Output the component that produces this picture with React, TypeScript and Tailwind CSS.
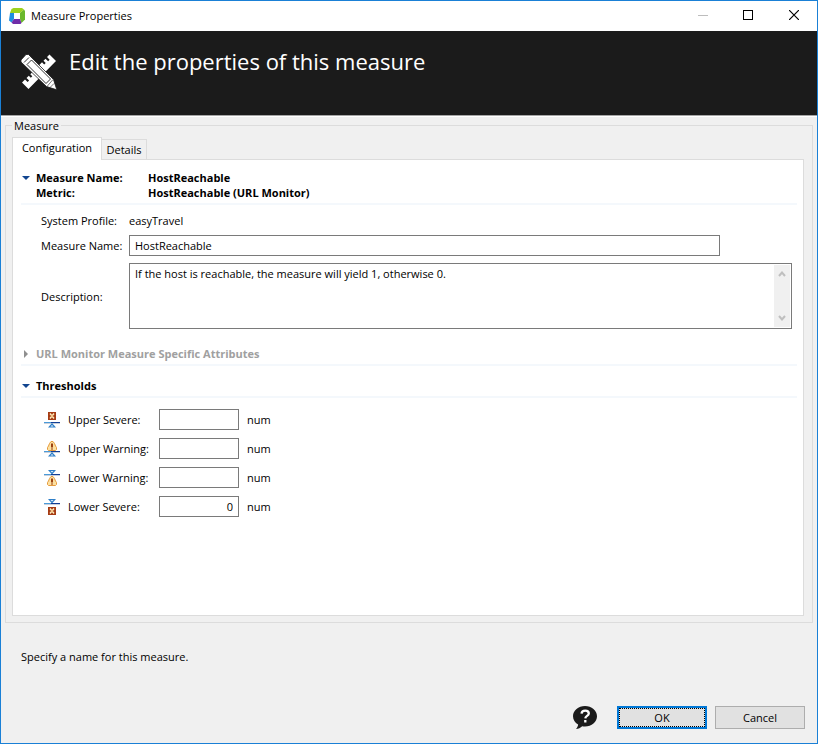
import { useState, type ReactNode } from "react";

function AppLogo() {
  return (
    <svg width="16" height="16" viewBox="0 0 16 16" aria-hidden="true">
      <path d="M4.500 0H13l2 1.500-4 3.500H5L1 5 2.500 1z" fill="#9bd21e" />
      <path d="M15 1.500l1 1.500v8.500L12.500 15 11 11V5z" fill="#6ab82c" />
      <path d="M1 5h4v6l-2.500 3.500L0 12.500z" fill="#1f8fe0" />
      <path d="M5 11h6l1.500 4-1 1H4l-1.500-1.500z" fill="#6f2da8" />
      <path d="M5 5h6v6H5z" fill="#ffffff" />
    </svg>
  );
}

function PencilRuler() {
  return (
    <svg width="36" height="36" viewBox="0 0 36 36" aria-hidden="true">
      <path
        d="M28.500 0.500l6.500 6.500L7.500 35 1 28.500l3-3 2.600 2.600 1.500-1.500L5.500 24l2.300-2.300 2 2 1.500-1.500-2-2L21 8.200l2.200 2.200 1.500-1.500-2.200-2.200 2-2 2.600 2.600 1.500-1.500L26 3z"
        fill="#ffffff"
      />
      <path d="M0 6L5 0.500h2.500L32.500 25.500l3.300 10.300-10.300-3.300L0 8z" fill="#ffffff" stroke="#1b1b1b" strokeWidth="0.800" />
      <path d="M3 8.500l5-5M6 10.500L25 29.500l4.500-4.500L10.500 6z" fill="none" stroke="#1b1b1b" strokeWidth="0.900" />
      <path d="M26 32.500l6-7" fill="none" stroke="#1b1b1b" strokeWidth="0.600" />
      <path d="M29 33.500l4-4" stroke="#1b1b1b" strokeWidth="0.600" />
    </svg>
  );
}

type Level = "severe" | "warning";

function SevereMark({ y }: { y: number }) {
  return (
    <g transform={`translate(4 ${y})`}>
      <rect width="8" height="8" fill="#a63c14" />
      <path d="M2 1.500l4 5M6 1.500l-4 5" fill="none" stroke="#fff0c0" strokeWidth="1.400" />
      <rect x="3" y="3" width="2" height="2" fill="#f4c88a" />
    </g>
  );
}

function WarningMark({ y }: { y: number }) {
  return (
    <g transform={`translate(3 ${y})`}>
      <path d="M4 .5h2l1.500 2 1 2.500 1 1.500v2l-1 1h-7l-1-1v-2l1-1.500 1-2.500z" fill="#fde0a0" stroke="#e59a3c" strokeWidth="1" />
      <path d="M4 2.500h2v4H4zM4 7.500h2v1H4z" fill="#9c4010" />
    </g>
  );
}

function ThresholdIcon({ level, upper }: { level: Level; upper: boolean }) {
  const markY = upper ? 0 : level === "severe" ? 8 : 6;
  return (
    <svg width="16" height="16" viewBox="0 0 16 16" aria-hidden="true">
      {level === "severe" ? <SevereMark y={markY} /> : <WarningMark y={markY} />}
      {upper ? (
        <g>
          <path d="M0 11h16v1H0z" fill="#c8d0dc" />
          <path d="M8 11l-4 4.500h8z" fill="#2f7fc8" />
          <path d="M8 13l-1.500 1.500h3z" fill="#e4f3fd" />
          <path d="M0 10h8v1H0z" fill="#4a9ad8" />
          <path d="M7 10h9v1H7z" fill="#123f96" />
        </g>
      ) : (
        <g>
          <path d="M0 5h16v1H0z" fill="#c8d0dc" />
          <path d="M4 0h8L8 4.500z" fill="#2f7fc8" />
          <path d="M6.500 1h3L8 2.500z" fill="#e4f3fd" />
          <path d="M0 4h8v1H0z" fill="#4a9ad8" />
          <path d="M7 4h9v1H7z" fill="#123f96" />
        </g>
      )}
    </svg>
  );
}

function Section({
  open,
  muted = false,
  onToggle,
  children,
}: {
  open: boolean;
  muted?: boolean;
  onToggle?: () => void;
  children: ReactNode;
}) {
  return (
    <button
      type="button"
      aria-expanded={open}
      onClick={onToggle}
      className={`flex w-full items-start border-b-2 border-[#f4f8fc] pb-[3px] text-left font-bold ${muted ? "text-[#a0a0a0]" : "text-black"}`}
    >
      <span className="flex h-[15px] w-[15px] shrink-0 items-center">
        {open ? (
          <svg width="10" height="6" viewBox="0 0 10 6" aria-hidden="true">
            <path d="M1 1h8L5 5z" fill="#11458f" />
          </svg>
        ) : (
          <svg width="10" height="8" viewBox="0 0 10 8" aria-hidden="true">
            <path d="M3 0l4 4-4 4z" fill="#8f8f8f" />
          </svg>
        )}
      </span>
      {children}
    </button>
  );
}

const thresholds: { id: string; label: string; level: Level; upper: boolean; value: string }[] = [
  { id: "upper-severe", label: "Upper Severe:", level: "severe", upper: true, value: "" },
  { id: "upper-warning", label: "Upper Warning:", level: "warning", upper: true, value: "" },
  { id: "lower-warning", label: "Lower Warning:", level: "warning", upper: false, value: "" },
  { id: "lower-severe", label: "Lower Severe:", level: "severe", upper: false, value: "0" },
];

function ConfigurationPanel() {
  const [detailsOpen, setDetailsOpen] = useState(false);
  return (
    <div role="tabpanel" className="flex-1 border border-[#dcdcdc] bg-white pt-[10px] pr-[6px] pl-2">
      <Section open>
        <span className="grid grid-cols-[112px_auto]">
          <span>Measure Name:</span>
          <span>HostReachable</span>
          <span>Metric:</span>
          <span>HostReachable (URL Monitor)</span>
        </span>
      </Section>

      <div className="grid grid-cols-[88px_1fr] items-center gap-y-[7px] pt-2 pr-[5px] pl-5">
        <span>System Profile:</span>
        <span>easyTravel</span>
        <label htmlFor="measure-name">Measure Name:</label>
        <input
          id="measure-name"
          defaultValue="HostReachable"
          className="mr-[72px] h-[21px] border border-[#7a7a7a] bg-white px-[5px] outline-none"
        />
        <label htmlFor="description">Description:</label>
        <div className="flex h-[66px] border border-[#7a7a7a] bg-white p-px">
          <textarea
            id="description"
            defaultValue="If the host is reachable, the measure will yield 1, otherwise 0."
            className="min-w-0 flex-1 resize-none overflow-hidden px-1 pt-px outline-none"
          />
          <div className="flex w-4 flex-col items-center justify-between bg-[#f0f0f0] py-[6px]" aria-hidden="true">
            <svg width="8" height="6" viewBox="0 0 8 6">
              <path d="M1 5l3-3.500L7 5" fill="none" stroke="#bfbfbf" strokeWidth="2" />
            </svg>
            <svg width="8" height="6" viewBox="0 0 8 6">
              <path d="M1 1l3 3.500L7 1" fill="none" stroke="#bfbfbf" strokeWidth="2" />
            </svg>
          </div>
        </div>
      </div>

      <div className="pt-[17px]">
        <Section open={detailsOpen} muted onToggle={() => setDetailsOpen(!detailsOpen)}>
          URL Monitor Measure Specific Attributes
        </Section>
      </div>
      <div className="pt-3">
        <Section open>Thresholds</Section>
      </div>

      <div className="flex flex-col gap-2 pt-[11px] pb-4 pl-[23px]">
        {thresholds.map((t) => (
          <div key={t.id} className="flex h-[21px] items-center">
            <ThresholdIcon level={t.level} upper={t.upper} />
            <label htmlFor={t.id} className="ml-2 w-[91px]">
              {t.label}
            </label>
            <input
              id={t.id}
              defaultValue={t.value}
              className="h-[21px] w-20 border border-[#7a7a7a] bg-white px-[5px] text-right outline-none"
            />
            <span className="ml-2">num</span>
          </div>
        ))}
      </div>
    </div>
  );
}

export default function App() {
  return (
    <div className="flex min-h-screen flex-col border border-[#1a80d6] bg-[#f0f0f0] font-['Open_Sans','Noto_Sans',sans-serif] text-[11px] leading-[15px] text-black">
      <header className="flex h-[30px] items-center bg-white pl-2">
        <AppLogo />
        <h1 className="ml-[6px] flex-1 pb-[2px]">Measure Properties</h1>
        <button type="button" aria-label="Minimize" className="flex h-full w-[45px] items-center justify-center pb-[2px]">
          <svg width="10" height="10" viewBox="0 0 10 10">
            <path d="M0 5.500h10" stroke="#bdbdbd" />
          </svg>
        </button>
        <button type="button" aria-label="Maximize" className="flex h-full w-[45px] items-center justify-center pb-[2px]">
          <svg width="10" height="10" viewBox="0 0 10 10">
            <rect x="0.500" y="0.500" width="9" height="9" fill="none" stroke="#000000" />
          </svg>
        </button>
        <button type="button" aria-label="Close" className="flex h-full w-[47px] items-center justify-center pb-[2px]">
          <svg width="10" height="10" viewBox="0 0 10 10">
            <path d="M0 0l10 10M10 0L0 10" stroke="#000000" strokeWidth="1.200" />
          </svg>
        </button>
      </header>

      <div className="flex h-[85px] border-b border-[#a5a5a5] bg-[#1b1b1b] pl-5">
        <div className="pt-[23px]">
          <PencilRuler />
        </div>
        <h2 className="ml-3 pt-[15px] text-[22px] leading-[30px] text-white">Edit the properties of this measure</h2>
      </div>

      <main className="flex flex-1 flex-col border-t border-white px-1 pt-2">
        <div
          role="group"
          aria-labelledby="measure-group"
          className="flex flex-1 flex-col border border-[#dcdcdc] pr-2 pb-[6px] pl-[6px]"
        >
          <span id="measure-group" className="-mt-2 w-fit bg-[#f0f0f0] px-[2px]">
            Measure
          </span>
          <div role="tablist" className="-mb-px flex items-end pt-1">
            <button
              type="button"
              role="tab"
              aria-selected="true"
              className="z-10 h-[23px] w-[90px] border border-b-0 border-[#dcdcdc] bg-white pb-[3px]"
            >
              Configuration
            </button>
            <button
              type="button"
              role="tab"
              aria-selected="false"
              className="-ml-px h-[21px] w-[46px] border border-[#dcdcdc] bg-[#f0f0f0]"
            >
              Details
            </button>
          </div>
          <ConfigurationPanel />
        </div>
      </main>

      <footer className="px-3 pt-[26px] pb-[14px]">
        <p className="pl-2">Specify a name for this measure.</p>
        <div className="flex items-center justify-end pt-[42px]">
          <button type="button" aria-label="Help" className="mr-5">
            <svg width="24" height="23" viewBox="0 0 24 23" aria-hidden="true">
              <path
                d="M12 0c6.600 0 12 4.500 12 10.200S18.600 20.500 12 20.500c-1 0-1.900-.1-2.800-.3C7.500 21.800 5.500 22.800 3 23c1.200-1.300 2-2.700 2.100-4.400C2 16.800 0 13.700 0 10.200 0 4.500 5.400 0 12 0z"
                fill="#1b1b1b"
              />
              <path
                d="M8.500 7.600c.2-2 1.600-3 3.700-3 2.200 0 3.600 1.100 3.600 2.800 0 2.500-3.400 2.500-3.500 5M12.300 14v2.400"
                fill="none"
                stroke="#ffffff"
                strokeWidth="2.300"
              />
            </svg>
          </button>
          <button type="button" className="h-[23px] w-[90px] border-2 border-[#0078d7] bg-[#e1e1e1]">
            <span className="flex h-full items-center justify-center border border-dotted border-black">OK</span>
          </button>
          <button type="button" className="ml-2 h-[23px] w-[90px] border border-[#adadad] bg-[#e1e1e1]">
            Cancel
          </button>
        </div>
      </footer>
    </div>
  );
}
